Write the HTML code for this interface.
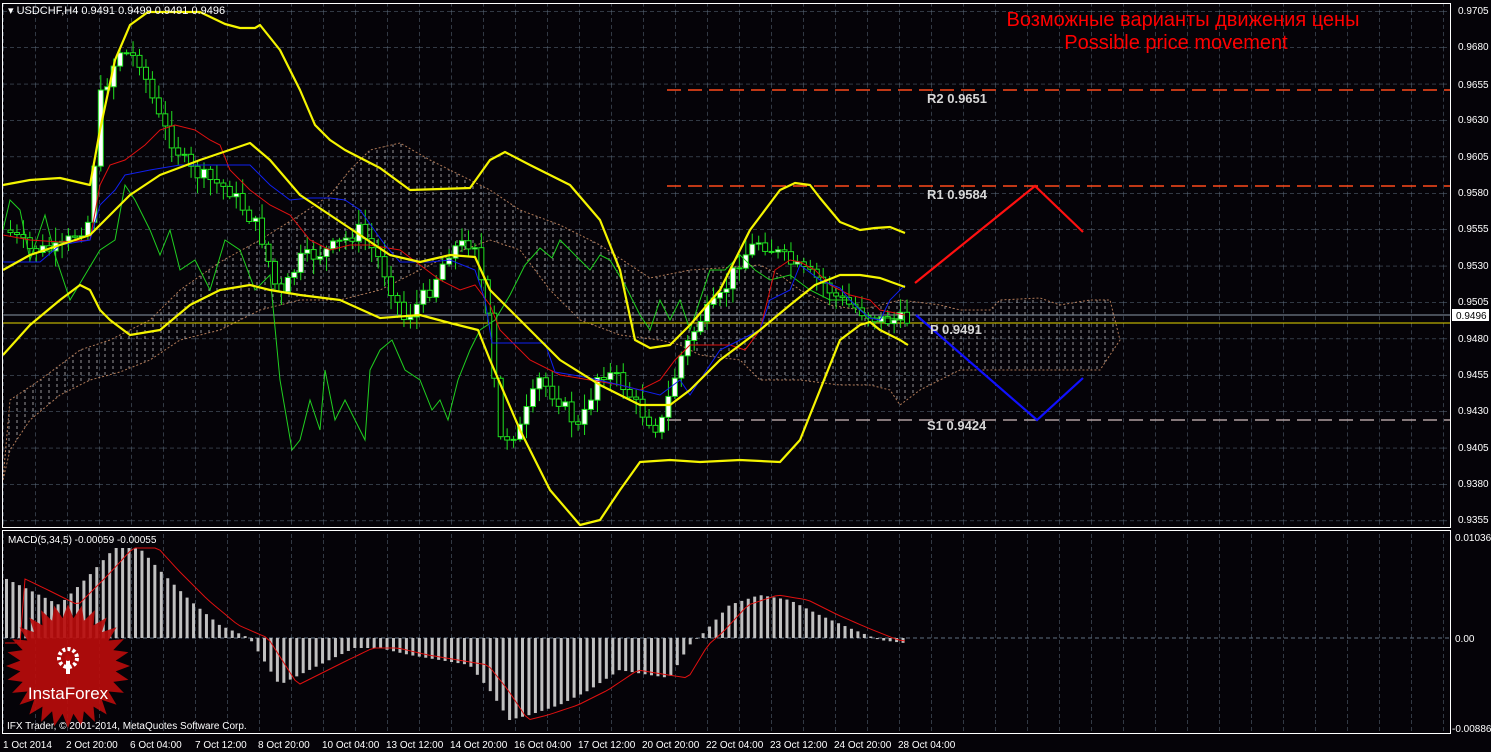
<!DOCTYPE html>
<html><head><meta charset="utf-8">
<style>
html,body{margin:0;padding:0;background:#000;width:1491px;height:752px;overflow:hidden}
svg{display:block}
text{font-family:"Liberation Sans",sans-serif}
</style></head>
<body>
<svg id="s" width="1491" height="752" viewBox="0 0 1491 752" xmlns="http://www.w3.org/2000/svg">
<defs>
<pattern id="gm" patternUnits="userSpaceOnUse" x="35" y="11" width="32" height="36.4">
<line x1="0" y1="0" x2="0" y2="36.4" stroke="#5e6f80" stroke-width="1" stroke-dasharray="4,3"/>
<line x1="0" y1="0" x2="32" y2="0" stroke="#5e6f80" stroke-width="1" stroke-dasharray="4,3"/>
</pattern>
<pattern id="gv" patternUnits="userSpaceOnUse" x="35" y="0" width="32" height="20">
<line x1="0" y1="0" x2="0" y2="20" stroke="#5e6f80" stroke-width="1" stroke-dasharray="4,3"/>
</pattern>
<pattern id="hatch" patternUnits="userSpaceOnUse" x="0" y="0" width="8" height="6">
<line x1="1" y1="0" x2="1" y2="3" stroke="#c8c8c8" stroke-width="1"/>
</pattern>
</defs>
<rect width="1491" height="752" fill="#050308"/>
<rect x="3" y="4" width="1447" height="523" fill="url(#gm)"/>
<rect x="3" y="531" width="1447" height="202" fill="url(#gv)"/>
<line x1="3" y1="638" x2="1450" y2="638" stroke="#5e6f80" stroke-dasharray="4,3"/>
<polygon points="3,480 10,400 40,380 80,350 110,340 150,320 180,290 220,262 260,240 300,215 330,195 350,170 370,150 400,143 430,160 470,180 490,190 520,210 560,225 600,245 630,265 650,278 690,270 720,268 760,265 780,275 800,290 830,305 860,310 880,305 900,300 940,305 960,310 990,310 1000,300 1040,298 1060,305 1090,300 1110,300 1120,340 1100,370 1050,370 990,370 960,370 940,380 920,390 900,405 890,390 870,385 840,385 800,380 760,380 740,360 700,355 680,345 660,340 620,335 580,320 550,290 520,250 490,240 450,255 420,270 380,290 340,300 300,300 260,310 220,330 180,340 150,360 120,372 90,380 60,395 30,420 10,450" fill="url(#hatch)" stroke="#e8a070" stroke-width="1" stroke-dasharray="2,2" opacity="0.75"/>
<line x1="3" y1="315" x2="1450" y2="315" stroke="#8a9aa8" stroke-width="1"/>
<line x1="3" y1="323" x2="1450" y2="323" stroke="#e8d800" stroke-width="1"/>
<line x1="667" y1="90" x2="1450" y2="90" stroke="#ff4a1a" stroke-width="1.5" stroke-dasharray="14,7"/>
<line x1="667" y1="186" x2="1450" y2="186" stroke="#ff4a1a" stroke-width="1.5" stroke-dasharray="14,7"/>
<line x1="667" y1="420" x2="1450" y2="420" stroke="#b0a0a0" stroke-width="1.5" stroke-dasharray="14,7"/>
<g id="candles"></g>
<polyline fill="none" stroke="#20d020" stroke-width="1" points="3,230 10,200 20,210 30,260 45,215 55,255 70,300 85,275 100,250 115,240 125,185 135,200 150,230 160,255 170,230 180,270 195,260 210,290 225,240 240,250 255,290 270,275 280,380 292,450 300,440 310,400 320,430 325,370 335,420 345,400 355,420 365,440 370,370 380,350 392,340 405,370 420,380 432,410 440,400 448,420 458,380 470,350 480,330 495,320 510,295 525,265 540,248 552,258 560,240 575,255 590,270 600,255 610,260 625,285 640,315 650,330 660,300 670,320 680,300 690,330 700,300 710,270 725,270 740,255 755,270 770,280 790,275 810,290 830,300 850,300 870,318 890,318 905,320"/>
<polyline fill="none" stroke="#e01010" stroke-width="1" points="3,235 30,240 60,242 90,240 100,185 110,165 125,160 145,145 160,130 175,125 195,130 210,140 220,145 230,170 250,190 270,205 290,215 310,240 330,250 350,245 370,245 400,250 420,265 440,280 460,290 475,285 490,305 500,330 510,340 530,360 560,375 590,380 620,385 640,390 660,380 675,360 690,345 710,345 730,345 745,350 760,330 775,270 790,260 800,262 815,270 830,285 850,295 870,300 880,310 905,315"/>
<polyline fill="none" stroke="#1020f0" stroke-width="1" points="3,262 40,262 60,245 90,240 100,205 115,190 125,175 150,170 180,165 200,165 220,165 250,165 270,185 290,200 310,198 330,198 345,200 360,210 385,245 400,262 430,262 450,260 475,270 485,300 492,343 520,343 545,343 555,372 590,378 620,385 660,395 680,380 690,395 700,380 720,350 740,340 760,330 770,300 790,290 800,265 820,280 840,288 850,300 860,310 870,318 880,320 890,300 905,285"/>
<g fill="none" stroke="#f5f500" stroke-width="2.2" stroke-linejoin="round">
<polyline points="3,185 30,180 60,178 90,185 100,130 115,60 130,25 148,12 200,12 225,24 240,28 255,28 260,25 280,50 300,90 315,125 330,140 345,150 380,168 410,190 470,188 490,160 505,152 530,165 570,185 600,220 620,270 635,340 650,348 670,345 690,325 720,290 750,230 780,190 795,183 810,185 820,198 840,222 860,230 875,228 890,227 905,233"/>
<polyline points="3,270 30,255 60,245 90,235 110,215 130,195 160,175 200,160 250,143 270,160 300,195 330,215 360,235 390,255 420,262 450,255 475,257 490,290 520,320 560,360 600,385 640,405 670,405 690,390 720,360 760,330 790,305 815,285 840,275 860,275 880,278 905,287"/>
<polyline points="3,355 30,325 60,300 80,285 90,290 100,310 110,320 130,335 160,330 190,305 220,290 250,285 270,290 300,295 340,300 380,318 420,315 450,323 478,330 490,360 520,430 550,490 580,525 600,520 620,490 640,462 670,460 700,462 740,460 780,462 800,440 820,390 840,340 860,325 870,322 880,330 900,340 908,345"/>
</g>
<polyline fill="none" stroke="#ff1010" stroke-width="2.2" points="915,283 1035,186 1083,232"/>
<polyline fill="none" stroke="#1010ff" stroke-width="2.2" points="916,315 1037,420 1083,378"/>
<g font-family="Liberation Mono,monospace" font-weight="bold" font-size="13" fill="#d8d8d8">
<text x="927" y="103">R2 0.9651</text>
<text x="927" y="199">R1 0.9584</text>
<text x="930" y="334">P 0.9491</text>
<text x="927" y="430">S1 0.9424</text>
</g>
<text x="1183" y="26" font-size="20" fill="#ff0000" text-anchor="middle">Возможные варианты движения цены</text>
<text x="1176" y="49" font-size="20" fill="#ff0000" text-anchor="middle">Possible price movement</text>
<g id="macd"></g>
<polyline id="sig" fill="none" stroke="#e01010" stroke-width="1" points=""/>
<g transform="translate(68,666)">
<polygon id="star" fill="#b80c0c" opacity="0.92" points=""/>
<circle cx="0" cy="-8" r="9" fill="none" stroke="#fff" stroke-width="4" stroke-dasharray="3,2.2"/>
<rect x="-2" y="-8" width="4" height="16" fill="#fff"/>
<circle cx="0" cy="-8" r="3" fill="#b80c0c"/>
<text x="0" y="33" text-anchor="middle" font-size="17" fill="#fff">InstaForex</text>
</g>
<rect x="2.5" y="3.5" width="1448" height="524" fill="none" stroke="#fff" stroke-width="1"/>
<rect x="2.5" y="530.5" width="1448" height="203" fill="none" stroke="#fff" stroke-width="1"/>
<text x="8" y="14" font-size="11" fill="#fff">▾ USDCHF,H4  0.9491 0.9499 0.9491 0.9496</text>
<text x="8" y="543" font-size="10" fill="#fff">MACD(5,34,5) -0.00059 -0.00055</text>
<text x="7" y="729" font-size="10" fill="#fff">IFX Trader, © 2001-2014, MetaQuotes Software Corp.</text>
<g font-size="10" fill="#fff">
<text x="1458" y="14">0.9705</text><text x="1458" y="50">0.9680</text><text x="1458" y="88">0.9655</text>
<text x="1458" y="123">0.9630</text><text x="1458" y="160">0.9605</text><text x="1458" y="196">0.9580</text>
<text x="1458" y="232">0.9555</text><text x="1458" y="269">0.9530</text><text x="1458" y="305">0.9505</text>
<text x="1458" y="342">0.9480</text><text x="1458" y="378">0.9455</text><text x="1458" y="414">0.9430</text>
<text x="1458" y="451">0.9405</text><text x="1458" y="487">0.9380</text><text x="1458" y="523">0.9355</text>
<text x="1455" y="541">0.01036</text><text x="1455" y="642">0.00</text><text x="1452" y="732">-0.00886</text>
</g>
<rect x="1452" y="309" width="37" height="12" fill="#fff"/>
<text x="1456" y="319" font-size="10" fill="#000">0.9496</text>
<g font-size="10" fill="#fff">
<text x="3" y="748">1 Oct 2014</text><text x="66" y="748">2 Oct 20:00</text><text x="130" y="748">6 Oct 04:00</text>
<text x="195" y="748">7 Oct 12:00</text><text x="258" y="748">8 Oct 20:00</text><text x="322" y="748">10 Oct 04:00</text>
<text x="386" y="748">13 Oct 12:00</text><text x="450" y="748">14 Oct 20:00</text><text x="514" y="748">16 Oct 04:00</text>
<text x="578" y="748">17 Oct 12:00</text><text x="642" y="748">20 Oct 20:00</text><text x="706" y="748">22 Oct 04:00</text>
<text x="770" y="748">23 Oct 12:00</text><text x="834" y="748">24 Oct 20:00</text><text x="898" y="748">28 Oct 04:00</text>
</g>
</svg>
<script>
(function(){
var NS="http://www.w3.org/2000/svg";
function interp(pts,x){for(var i=0;i<pts.length-1;i++){if(x>=pts[i][0]&&x<=pts[i+1][0]){var t=(x-pts[i][0])/(pts[i+1][0]-pts[i][0]);return pts[i][1]+t*(pts[i+1][1]-pts[i][1]);}}return pts[pts.length-1][1];}
var price=[[8,230],[30,250],[60,250],[90,220],[100,100],[120,50],[140,60],[160,120],[190,170],[230,190],[260,230],[280,300],[300,260],[330,250],[360,230],[380,260],[405,320],[430,290],[450,250],[475,240],[490,330],[500,440],[520,430],[540,380],[560,400],[580,430],[600,370],[620,380],[640,410],[660,430],[680,360],[700,320],[720,300],[740,260],[760,240],[780,255],[800,270],[820,280],[840,300],[860,310],[880,320],[905,320]];
var g=document.getElementById("candles"),seed=7;
function rnd(){seed=(seed*9301+49297)%233280;return seed/233280;}
var prev=interp(price,8);
for(var x=8;x<=905;x+=6.45){
 var c=interp(price,x+3)+(rnd()-0.5)*16,o=prev;
 var hi=Math.min(o,c)-rnd()*14-2,lo=Math.max(o,c)+rnd()*14+2;
 var w=document.createElementNS(NS,"line");
 w.setAttribute("x1",x+2.5);w.setAttribute("x2",x+2.5);w.setAttribute("y1",hi);w.setAttribute("y2",lo);
 w.setAttribute("stroke","#20e020");g.appendChild(w);
 var r=document.createElementNS(NS,"rect");
 r.setAttribute("x",x);r.setAttribute("width",5);r.setAttribute("y",Math.min(o,c));r.setAttribute("height",Math.max(1,Math.abs(o-c)));
 r.setAttribute("fill",c<o?"#fff":"#000");r.setAttribute("stroke","#20e020");r.setAttribute("stroke-width","1");g.appendChild(r);
 prev=c;
}
var mac=[[5,578],[30,590],[60,605],[90,575],[115,548],[140,548],[160,570],[190,600],[220,625],[250,638],[280,685],[300,675],[330,660],[355,648],[380,648],[410,655],[440,660],[470,665],[490,690],[510,720],[530,715],[560,705],[590,690],[620,670],[650,675],[670,678],[690,645],[705,632],[730,605],[760,595],[790,600],[820,615],[850,628],[880,640],[905,643]];
var m=document.getElementById("macd");
for(var x=5;x<=905;x+=6.45){
 var y=interp(mac,x+2);var r=document.createElementNS(NS,"rect");
 r.setAttribute("x",x);r.setAttribute("width",3);r.setAttribute("y",Math.min(y,638));r.setAttribute("height",Math.abs(y-638));
 r.setAttribute("fill","#c0c0c0");m.appendChild(r);
}
var sp=[];for(var x=5;x<=905;x+=5){sp.push(x+","+(interp(mac,x-18)));}
document.getElementById("sig").setAttribute("points",sp.join(" "));
var st=[];for(var i=0;i<56;i++){var a=i*Math.PI/28,rr=i%2?48:62;st.push((Math.sin(a)*rr).toFixed(1)+","+(-Math.cos(a)*rr).toFixed(1));}
document.getElementById("star").setAttribute("points",st.join(" "));
})();
</script>
</body></html>
